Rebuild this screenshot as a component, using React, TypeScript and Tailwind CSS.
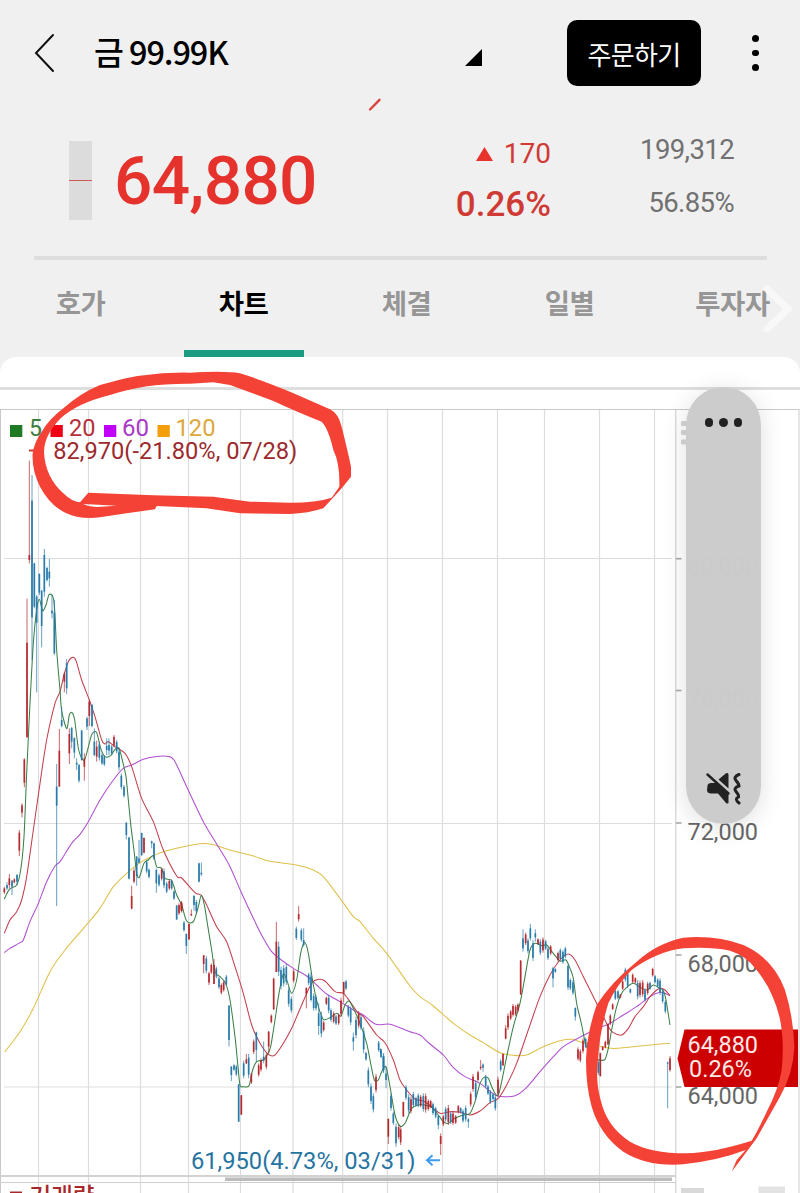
import React from "react";

type Pt = [number, number];
type Block = { ox: number; oy: number; rows: string };

const UP = "#b3262b";
const DOWN = "#2478a8";

// Candle rows: direction, x, high, low and optionally body top, body bottom.
// Values are thirds of a pixel, relative to the block's origin.
const candleBlocks: Block[] = [
  {
    ox: 0,
    oy: 370,
    rows: `r 81 686 1102 818 1102;r 88 272 580 555 570;b 96 315 870 392 742;b 103 578 715 580 710;b 110 675 967 680 758;b 118 610 675 612 668;b 125 660 832 662 768;b 133 537 680 555 665;b 141 590 635 594 630;b 148 567 650 605 625;b 156 675 745 722 730;b 163 690 855 728 850;r 193 905 967 912 935;b 200 867 972 880 955`,
  },
  {
    ox: 0,
    oy: 640,
    rows: `r 13 740 762 745 757;b 21 727 750 735 745;r 28 702 745 715 735;b 36 720 765 722 740;r 43 715 730 718 727;b 51 702 735 705 725;r 58 570 648 578 632;r 66 490 532 496 518;r 73 355 442 358 428;b 170 372 798 440 497;r 178 267 440 332 440;b 185 200 262 240 258;r 208 265 372 282 340;b 215 262 325 263 305;b 223 292 355 294 338;b 230 355 390 368 374;b 237 372 428 375 422;b 245 270 362 272 360;r 253 340 422 355 380;b 261 230 270 235 260;r 268 182 258 185 228;b 276 192 262 195 258;b 283 265 348 305 345;r 290 302 365 320 350;b 298 305 362;b 306 340 375;b 313 345 378;b 320 295 345 318 330;b 327 295 345 315 332;b 335 315 345;r 342 285 322;b 350 300 340;b 357 325 392;b 364 400 448;b 372 435 473;b 379 547 598 548 585;b 387 592 718 592 716;r 395 737 808 768 806;r 402 685 730 692 725;b 410 648 737 650 708;b 417 600 670 655 668;b 425 578 648 579 645;r 432 592 640 594 638;b 440 660 700;b 447 685 715;b 455 602 625 604 610;b 462 608 660 610 655;b 469 685 758 690 730;b 477 700 740;r 485 683 722;b 492 685 745;b 500 725 760;r 508 718 750;b 515 718 750;b 522 750 780;b 530 795 840 797 838;r 537 790 825;r 544 783 815;b 552 843 875;b 559 880 942 882 918;r 567 850 900 852 898;r 574 808 828 822 826;b 582 765 812 768 795;b 589 780 820;b 597 668 727 670 725;b 604 668 708 698 703`,
  },
  {
    ox: 180,
    oy: 850,
    rows: `r 5 155 188;r 71 315 370 316 342;b 79 318 370;r 87 365 405 370 398;r 94 340 372;r 102 327 402 345 402;b 109 350 385;b 117 380 417;r 124 400 433;r 131 392 425;b 139 375 408;b 147 465 590 467 570;b 154 648 693 650 675;b 162 643 662;b 169 645 678;b 176 702 815 703 815;r 184 735 795 736 794;b 191 632 685;r 199 612 642 628 640;b 206 612 685;r 214 668 702;r 221 568 612;b 229 545 635 547 600;r 236 640 680;r 243 625 665;b 251 575 640 620 632;r 259 608 658;r 266 543 610 545 590;r 274 493 520;r 281 383 480 386 478;r 289 216 366 275 366;b 296 275 378 290 365;b 303 350 418;b 311 345 410;b 319 342 405;b 326 412 470;b 334 440 488;r 341 358 398;b 349 230 270;r 356 168 215 192 208;b 364 235 275;b 371 235 290 270 285;r 379 412 475 414 432;b 386 368 405;b 393 368 455 380 450;b 401 430 482;b 408 435 482;b 416 460 555 490 528;b 424 485 562;r 431 513 545;r 439 440 465;b 446 435 490;b 453 475 515;r 461 485 520;b 468 495 525;r 476 490 525;r 483 443 500;r 491 395 458 396 430;b 498 390 420;b 505 465 502;b 512 470 525;b 520 548 602 562 575;b 528 500 565;r 536 483 535;b 543 495 540;b 551 532 610;b 558 605 632;b 565 652 712;b 573 700 762;b 580 730 787;r 588 672 728;b 596 573 605;b 603 597 625;b 611 610 668;b 618 650 715 670 690;r 625 805 882 807 860;b 633 730 782;b 640 785 825;b 648 820 890;r 656 825 868;r 662 830 885;r 670 755 800 756 800;b 678 705 750`,
  },
  {
    ox: 380,
    oy: 900,
    rows: `b 2 445 462;b 10 460 518;b 86 583 640;r 93 590 640;b 100 575 622;b 108 590 620;b 115 580 622;r 122 585 622;b 130 580 635;r 137 580 638;r 145 598 632;r 152 600 625;b 159 607 645;b 167 620 655;b 175 645 687 648 675;r 182 700 765 708 732;r 190 645 678;b 197 620 665;r 205 615 675;b 212 635 672;r 219 635 675;r 227 645 672;r 235 615 640;b 242 622 640;b 249 628 668;b 257 617 665;b 265 655 683 658 665;r 272 575 620;r 279 522 575;b 287 540 600;r 294 512 545;r 302 480 510 500 505;b 309 490 515 494 503;b 317 525 565;b 324 555 585;b 331 570 612;b 339 580 600;b 346 585 632;r 354 530 590;b 362 478 515;r 369 460 498 462 496;r 377 375 418 385 416;r 384 340 390;r 392 330 360;r 399 312 350;r 407 315 348;r 414 310 335;r 422 180 285 182 283;b 429 88 155 115 145;r 437 98 135;b 444 115 160;b 451 72 122 85 115;b 459 120 183;b 466 88 125 100 112;r 474 115 135;b 481 118 165;r 489 112 158;b 497 120 150;b 504 140 180;r 512 135 165;b 519 200 262 205 235;b 526 205 218;r 534 155 185;b 541 145 182;b 549 150 192;b 556 140 175;b 564 195 270 198 262;b 571 235 270;b 579 240 285;b 586 322 362 324 350;r 594 442 482;r 601 448 487;r 609 415 460;b 617 412 445;r 624 425 455`,
  },
  {
    ox: 560,
    oy: 900,
    rows: `b 115 480 525;r 121 458 530 460 528;r 128 438 452;r 136 422 445;r 144 370 435 372 433;r 151 342 375;r 158 310 330;b 166 268 300;b 174 270 298;r 181 282 295;r 188 240 270;b 196 203 245;b 203 215 265;b 211 265 280;r 218 220 250;r 226 232 250;b 233 240 298;r 240 242 292;r 248 240 290;b 255 265 305;r 263 245 285;b 270 245 270;r 278 203 230;b 285 225 250;b 293 235 262;b 300 235 285;b 308 268 310;b 316 300 340;b 323 485 625 487 491;r 330 468 515 475 510`,
  },
];

const ma5: Block[] = [
  { ox: 0, oy: 640, rows: "13,777 28,748 50,735 62,690 72,590 80,400 90,190" },
  { ox: 0, oy: 370, rows: "100,820 110,720 118,688 128,722 138,705 148,673 162,695 170,840 180,960" },
  { ox: 0, oy: 640, rows: "185,212 200,266 208,225 216,218 224,240 236,330 252,362 264,325 276,282 290,278 302,325 315,350 332,347 345,328 357,325 368,365 378,410 385,480 393,560 403,640 410,700 418,712 432,670 445,660 460,647 470,680 485,685 495,715 515,722 530,765 545,795 560,843 580,845 595,800 604,766 614,800 622,850" },
  { ox: 180, oy: 850, rows: "95,300 105,365 120,380 137,400 150,450 165,560 173,640 180,705 190,710 207,707 218,660 230,635 250,630 262,615 272,590 285,510 297,430 310,372 322,395 335,430 350,390 362,310 374,277 385,310 400,405 415,470 430,508 450,503 470,490 483,498 495,465 507,453 520,475 540,520 560,580 572,640 583,690 595,690 605,665 618,650 630,710 645,795 660,828 675,820" },
  { ox: 380, oy: 900, rows: "95,625 115,615 135,615 155,622 175,645 190,665 205,670 225,655 250,645 270,640 285,605 300,550 312,532 325,535 335,560 345,580 355,585 365,545 380,470 400,380 420,310 435,230 450,150 465,130 485,137 500,135 520,160 540,183 558,180 570,205 580,235 590,310 605,375 617,435" },
  { ox: 560, oy: 900, rows: "85,445 100,470 118,480 135,478 145,445 155,390 170,320 185,280 200,262 220,250 240,262 260,270 280,255 300,265 310,272 318,300 330,375" },
];

const ma20: Block[] = [
  { ox: 0, oy: 640, rows: "13,880 30,840 50,815 65,780 80,710 100,570 120,430 140,300 165,190 180,155 192,105 205,65 218,52 228,62 245,120 268,180 285,230 305,300 315,312 325,305 345,320 375,340 395,380 425,475 460,545 490,630 530,708 545,714 585,758 604,766 620,795 650,860" },
  { ox: 180, oy: 850, rows: "140,275 165,350 190,430 215,525 240,580 265,613 285,615 310,580 335,535 365,465 395,400 415,388 435,393 465,425 490,430 510,455 535,490 550,500 590,555 615,578 640,630" },
  { ox: 380, oy: 900, rows: "60,540 80,570 105,597 130,603 155,620 180,640 210,635 240,637 270,645 300,633 330,608 355,595 380,555 410,490 450,375 480,290 510,225 540,180 565,162 585,180 610,230 640,290" },
  { ox: 560, oy: 900, rows: "130,350 145,380 160,398 185,405 205,385 225,350 250,320 270,290 290,270 303,265 315,270 330,287" },
];

const ma60: Block[] = [
  { ox: 0, oy: 640, rows: "13,938 25,928 60,908 70,900 90,845 115,790 140,725 165,678 180,665 215,610 240,583 265,545 300,480 340,420 370,385 395,375 430,358 465,350 500,349 522,360 560,440 610,545 655,620" },
  { ox: 180, oy: 850, rows: "150,50 185,130 220,205 250,265 275,305 300,327 340,355 380,378 410,405 440,432 480,455 520,480 550,495 588,523 630,523" },
  { ox: 380, oy: 900, rows: "90,395 120,405 150,432 190,465 220,503 255,530 300,550 350,587 405,587 440,562 480,515 520,470 550,440 590,417" },
  { ox: 560, oy: 900, rows: "120,382 145,373 190,345 230,320 270,290 300,277 315,280 330,287" },
];

const ma120: Block[] = [
  { ox: 0, oy: 640, rows: "14,1236 60,1175 100,1105 150,995 195,930 265,848 300,805 340,740 380,700 420,668 460,647 500,632 600,611 640,614" },
  { ox: 180, oy: 850, rows: "150,0 220,18 270,34 350,45 400,60 430,80 480,145 520,200 540,215 580,265 620,310" },
  { ox: 380, oy: 900, rows: "90,258 120,290 160,318 220,370 270,405 310,428 360,458 400,466 440,465 490,440 540,422 580,418" },
  { ox: 560, oy: 900, rows: "60,425 140,443 170,445 240,438 300,432 330,430" },
];

function toPoints(blocks: Block[]): Pt[] {
  return blocks.flatMap((b) =>
    b.rows.split(" ").map((p): Pt => {
      const [x, y] = p.split(",").map(Number);
      return [b.ox + x / 3, b.oy + y / 3];
    }),
  );
}

function smooth(pts: Pt[]): string {
  let d = `M${pts[0][0]} ${pts[0][1]}`;
  for (let i = 0; i < pts.length - 1; i++) {
    const p0 = pts[Math.max(0, i - 1)];
    const p1 = pts[i];
    const p2 = pts[i + 1];
    const p3 = pts[Math.min(pts.length - 1, i + 2)];
    const k = 7;
    d += `C${p1[0] + (p2[0] - p0[0]) / k} ${p1[1] + (p2[1] - p0[1]) / k} ${p2[0] - (p3[0] - p1[0]) / k} ${p2[1] - (p3[1] - p1[1]) / k} ${p2[0]} ${p2[1]}`;
  }
  return d;
}

const lines = [
  { d: smooth(toPoints(ma120)), color: "#dfc04a" },
  { d: smooth(toPoints(ma60)), color: "#b050d0" },
  { d: smooth(toPoints(ma20)), color: "#c2404f" },
  { d: smooth(toPoints(ma5)), color: "#3c8048" },
];

const candles = candleBlocks.flatMap((b) =>
  b.rows.split(";").map((row) => {
    const [dir, ...rest] = row.split(" ");
    const [x, hi, lo, t, bt] = rest.map(Number);
    const top = t ?? hi + (lo - hi) * 0.15;
    const bottom = bt ?? lo - (lo - hi) * 0.15;
    return {
      color: dir === "r" ? UP : DOWN,
      x: b.ox + x / 3,
      hi: b.oy + hi / 3,
      lo: b.oy + lo / 3,
      top: b.oy + top / 3,
      bottom: b.oy + bottom / 3,
    };
  }),
);

const gridX = [38.5, 88.5, 140.5, 188.5, 240.5, 293, 342.7, 387.5, 442.5, 497.5, 544.5, 599.5, 654.5];
const gridY = [558.5, 823.5, 1087];
const ticks = [558.7, 690.5, 823, 955, 1087];

const legend = [
  { x: 10, tx: 29, w: 13, label: "5", box: "#1f7a24", text: "#3c8040" },
  { x: 50.5, tx: 69, w: 26.5, label: "20", box: "#f00014", text: "#b5303a" },
  { x: 104, tx: 122, w: 27, label: "60", box: "#c000f8", text: "#a93ac4" },
  { x: 157.5, tx: 175.5, w: 40, label: "120", box: "#f59e0b", text: "#dca83c" },
];

const axisLabels = [
  { y: 575, label: "80,000" },
  { y: 707, label: "76,000" },
  { y: 839.5, label: "72,000" },
  { y: 971.5, label: "68,000" },
  { y: 1103.5, label: "64,000" },
];

function Chart() {
  return (
    <svg
      width="800"
      height="836"
      viewBox="0 357 800 836"
      className="block font-[Roboto,sans-serif] text-[23px]"
    >
      <rect x="0" y="387" width="800" height="3" fill="#dedede" />
      <g stroke="#dddddd" strokeWidth="1.2">
        {gridX.map((x) => (
          <line key={x} x1={x} x2={x} y1="409" y2="1193" />
        ))}
        {gridY.map((y) => (
          <line key={y} x1="4" x2="672" y1={y} y2={y} />
        ))}
      </g>
      <g stroke="#c9c9c9" strokeWidth="1">
        <line x1="0" x2="800" y1="409.5" y2="409.5" />
        <line x1="0.5" x2="0.5" y1="409" y2="1193" />
        <line x1="675.8" x2="675.8" y1="409" y2="1193" />
        <line x1="799" x2="799" y1="409" y2="1193" strokeWidth="1.5" stroke="#dcdcdc" />
      </g>
      <g stroke="#a8a8a8" strokeWidth="1.6">
        {ticks.map((y) => (
          <line key={y} x1="676" x2="681.5" y1={y} y2={y} />
        ))}
      </g>
      <g fill="#d6d6d6">
        <rect x="681" y="421" width="14" height="5" rx="1" />
        <rect x="681" y="430" width="14" height="5" rx="1" />
        <rect x="681" y="439.5" width="14" height="5" rx="1" />
      </g>

      <g fill="none" strokeWidth="1.05">
        {lines.map((l) => (
          <path key={l.color} d={l.d} stroke={l.color} />
        ))}
      </g>
      {candles.map((c, i) => (
        <g key={i} fill={c.color}>
          <rect x={c.x - 0.5} y={c.hi} width="1" height={c.lo - c.hi} opacity="0.7" />
          <rect x={c.x - 0.85} y={c.top} width="1.7" height={Math.max(1, c.bottom - c.top)} opacity="0.95" />
        </g>
      ))}

      {legend.map((l) => (
        <g key={l.label}>
          <rect x={l.x} y="425" width="12.3" height="12" fill={l.box} />
          <text x={l.tx} y="435.5" fill={l.text} textLength={l.w} lengthAdjust="spacingAndGlyphs">
            {l.label}
          </text>
        </g>
      ))}
      <rect x="29" y="449.5" width="8" height="2" fill="#d03a34" />
      <text x="53.3" y="458.5" fill="#9c2a2c" textLength="244" lengthAdjust="spacingAndGlyphs">
        82,970(-21.80%, 07/28)
      </text>
      <text x="191" y="1168.5" fill="#2674a2" textLength="224.5" lengthAdjust="spacingAndGlyphs">
        61,950(4.73%, 03/31)
      </text>
      <path d="M440 1160.3H427M432.5 1155.3L427 1160.3L432.5 1165.3" fill="none" stroke="#3d9cf0" strokeWidth="2" />

      {axisLabels.map((a) => (
        <text key={a.label} x="687.5" y={a.y} fill="#666666" textLength="70.5" lengthAdjust="spacingAndGlyphs">
          {a.label}
        </text>
      ))}
      <path d="M677.5 1058.5L684.5 1029.5H798V1087H684.5Z" fill="#cc0000" />
      <g fill="#fbe9e9">
        <text x="687.5" y="1052.5" textLength="70.5" lengthAdjust="spacingAndGlyphs">
          64,880
        </text>
        <text x="689" y="1076.5" textLength="63" lengthAdjust="spacingAndGlyphs">
          0.26%
        </text>
      </g>

      <rect x="0" y="1175" width="676" height="2" fill="#d2d2d2" />
      <rect x="225" y="1177.5" width="447" height="3.5" fill="#bcbcbc" />
      <rect x="0" y="1182" width="676" height="1" fill="#cfcfcf" />
      <rect x="10" y="1191.5" width="12" height="2" fill="#a8282c" />
      <text
        x="29.5"
        y="1203.5"
        fill="#a8282c"
        textLength="65"
        lengthAdjust="spacingAndGlyphs"
        className="font-['Noto_Sans_CJK_KR',sans-serif] font-medium"
      >
        거래량
      </text>
      <rect x="681" y="1188" width="23" height="5" fill="#d9d9d9" />
      <rect x="758.5" y="1186.5" width="26.5" height="7" fill="#e3e3e3" />
    </svg>
  );
}

function VolumePanel() {
  return (
    <div className="absolute left-[686px] top-[387px] flex h-[437px] w-[75px] flex-col items-center justify-between rounded-full bg-[#cbcbcb]/99 pt-[31px] pb-[19px] shadow-[0_4px_24px_rgba(0,0,0,0.13)]">
      <div className="flex gap-[6px]">
        <span className="size-[8.6px] rounded-full bg-[#222]" />
        <span className="size-[8.6px] rounded-full bg-[#222]" />
        <span className="size-[8.6px] rounded-full bg-[#222]" />
      </div>
      <svg width="36" height="33" viewBox="0 0 36 33" fill="none">
        <path d="M1.500 13.500Q2 11 5 11H10L22.500 22V31Q21.500 32 20 31L12 21.500H4.500Q1 21 1 18Z" fill="#222" />
        <path d="M12.500 7.500L20 1.300Q22.500 0 22.500 3V16.500Z" fill="#222" />
        <path d="M1.500 2.500L22.500 21.500" stroke="#222" strokeWidth="2.400" strokeLinecap="round" />
        <path d="M33 2.500Q27 5 30 8.500T33 14Q27 16 30 19.500T32.500 25Q28 27 33 31" stroke="#222" strokeWidth="3" strokeLinecap="round" />
      </svg>
    </div>
  );
}

function Markup() {
  return (
    <svg
      className="pointer-events-none absolute inset-0"
      width="800"
      height="1193"
      viewBox="0 0 800 1193"
      fill="#f44336"
      fillRule="evenodd"
    >
      <path d="M370 109.500L379.500 99.800" stroke="#d8453e" strokeWidth="2.400" strokeLinecap="round" />
      <path
        transform="translate(0 370) scale(0.33333)"
        d="M470 408L465 418L380 430L300 442Q265 447 230 440Q160 425 120 350Q95 300 98 250Q103 215 127 182Q150 145 190 115Q240 70 300 45Q430 5 570 8Q680 2 720 10Q780 28 870 65L990 118Q1015 130 1025 170Q1045 250 1053 290L1053 320L1025 355L995 388L970 415Q925 430 870 432L720 430L620 415ZM265 368L460 376L640 380L750 395L870 398Q950 398 995 383L1018 350Q1020 280 1000 240Q985 175 965 155Q900 130 820 93L690 45L640 37L570 41Q430 40 330 75Q230 100 182 145Q133 195 132 245Q135 320 190 370Q215 395 240 397ZM250 402L350 407L290 411Q262 409 250 402Z"
      />
      <path
        transform="translate(560 900) scale(0.33333)"
        d="M515 815L530 780L557 750Q480 780 370 793Q260 800 190 755Q120 705 95 620Q78 560 78 480Q80 400 110 315Q150 250 230 185Q290 130 370 113Q470 105 550 135Q640 175 675 270Q700 350 703 440Q700 520 660 590L590 715ZM575 722Q460 758 380 760Q270 760 210 725Q140 680 122 600Q105 540 115 470Q118 400 145 310Q170 255 215 210Q290 155 370 145Q450 140 510 152Q560 168 588 208Q622 250 638 290Q660 340 665 390Q672 440 665 510Q655 570 620 635Q590 700 575 722Z"
      />
    </svg>
  );
}

const tabs = ["호가", "차트", "체결", "일별", "투자자"];

export default function App() {
  return (
    <div className="relative flex h-[1193px] w-[800px] flex-col overflow-hidden bg-[#f0f0f0] font-[Roboto,'Noto_Sans_CJK_KR',sans-serif]">
      <header className="flex h-[106px] items-center pl-[34px] pr-[41.500px]">
        <svg width="21" height="40" viewBox="0 0 21 40" fill="none" stroke="#111" strokeWidth="2">
          <path d="M19 2L2 20L19 38" strokeLinecap="round" />
        </svg>
        <h1 className="mb-[4px] ml-[39px] whitespace-nowrap font-['Noto_Sans_CJK_KR',sans-serif] text-[32.500px] font-medium leading-none tracking-[-1.100px] text-black">
          금 99.99K
        </h1>
        <svg className="ml-auto mt-[8px]" width="17" height="17" viewBox="0 0 17 17">
          <path d="M0 17L17 0V17Z" />
        </svg>
        <button className="ml-[85px] h-[66px] w-[134px] rounded-[10px] bg-black font-['Noto_Sans_CJK_KR',sans-serif] text-[26px] tracking-[-0.700px] text-white">
          주문하기
        </button>
        <div className="ml-[51px] flex flex-col gap-[8px]">
          <span className="size-[6.500px] rounded-full bg-black" />
          <span className="size-[6.500px] rounded-full bg-black" />
          <span className="size-[6.500px] rounded-full bg-black" />
        </div>
      </header>

      <section className="ml-[34px] mr-[33px] flex h-[154px] border-b-[4px] border-[#dedede]">
        <div className="ml-[35px] mt-[35px] flex h-[79px] w-[23px] items-center bg-[#dcdcdc]">
          <span className="h-[1.500px] w-full bg-[#cf5a55]" />
        </div>
        <div className="ml-[22px] mt-[42px] w-[210px] text-[67.500px] font-medium leading-[66px] tracking-[-0.700px] text-[#e5322d]">
          64,880
        </div>
        <div className="ml-auto mt-[29px] flex flex-col items-end text-[#cf3a35]">
          <div className="flex h-[38px] items-center text-[28px]">
            <svg className="mr-[11px]" width="17" height="14" viewBox="0 0 17 14">
              <path d="M8.500 0L17 14H0Z" fill="#e8322c" />
            </svg>
            170
          </div>
          <div className="mt-[10.500px] h-[42px] text-[35px] font-medium leading-[42px]">0.26%</div>
        </div>
        <div className="mr-[33px] mt-[25px] flex w-[183px] flex-col items-end text-[27.500px] tracking-[-0.600px] text-[#717171]">
          <div className="leading-[38px]">199,312</div>
          <div className="mt-[15px] leading-[38px]">56.85%</div>
        </div>
      </section>

      <nav className="relative -left-px flex h-[97px] shrink-0">
        {tabs.map((t, i) => (
          <div
            key={t}
            className={
              "flex w-[163px] shrink-0 flex-col items-center pt-[21px] font-['Noto_Sans_CJK_KR',sans-serif] text-[27.500px] font-bold leading-[42px] tracking-[-0.500px] " +
              (i === 1 ? "text-black" : "text-[#969696]")
            }
          >
            {t}
            {i === 1 && <span className="mt-[27px] h-[7px] w-[120px] bg-[#1a9c82]" />}
          </div>
        ))}
        <svg className="absolute left-[763px] top-[23px]" width="32" height="52" viewBox="0 0 32 52" fill="none">
          <path d="M5 6L26 26L5 46" stroke="#fafafa" strokeWidth="7" strokeLinecap="round" opacity="0.8" />
        </svg>
      </nav>

      <main className="h-[836px] shrink-0 overflow-hidden rounded-t-[16px] bg-white">
        <Chart />
      </main>

      <VolumePanel />
      <Markup />
    </div>
  );
}
